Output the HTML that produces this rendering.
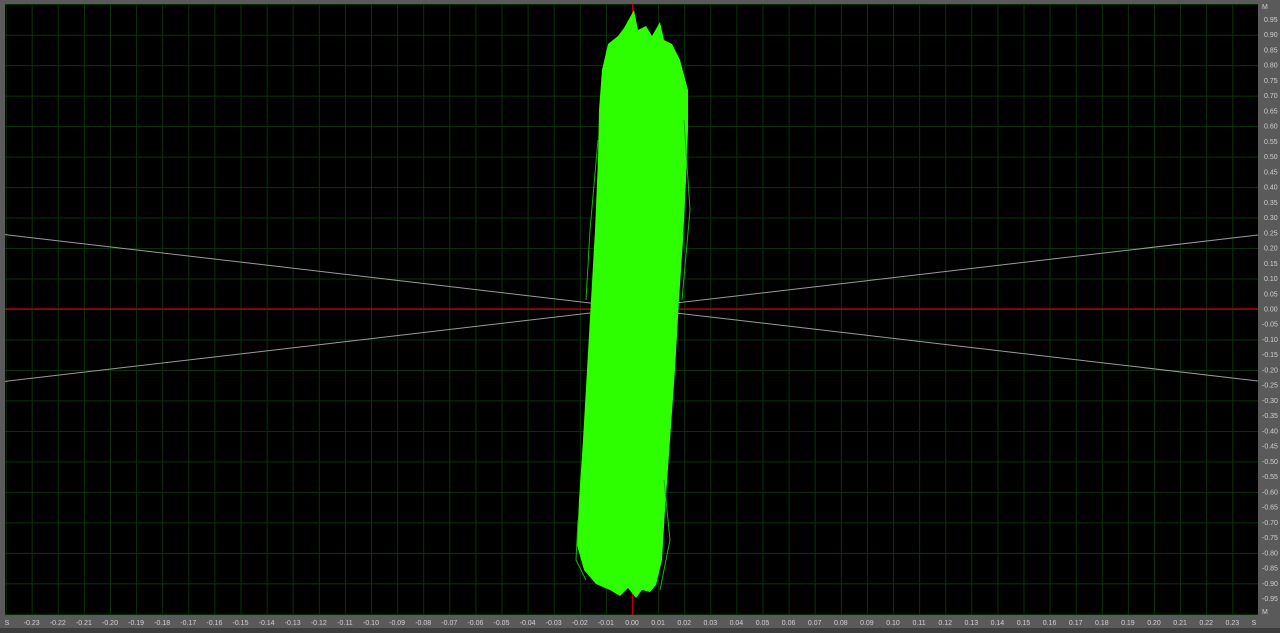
<!DOCTYPE html>
<html><head><meta charset="utf-8"><style>
html,body{margin:0;padding:0;background:#3a3a3a;width:1280px;height:633px;overflow:hidden}
svg{display:block}
text{font-family:"Liberation Sans",sans-serif;font-size:7px;fill:#cfcfcf}
</style></head><body>
<svg width="1280" height="633" viewBox="0 0 1280 633">
<defs>
<pattern id="g" patternUnits="userSpaceOnUse" x="632" y="309" width="26.1" height="30.48">
<rect width="26.1" height="30.48" fill="#000"/>
<line x1="0.5" y1="0" x2="0.5" y2="30.48" stroke="#0a330a" stroke-width="1"/>
<line x1="0" y1="0.5" x2="26.1" y2="0.5" stroke="#0a330a" stroke-width="1"/>
</pattern>
<clipPath id="c"><rect x="5" y="4" width="1253" height="611"/></clipPath>
</defs>
<rect x="0" y="0" width="1280" height="633" fill="#5a5a5a"/>
<rect x="0" y="628" width="1280" height="5" fill="#3c3c3c"/>
<rect x="5" y="4" width="1253" height="611" fill="url(#g)"/>
<g clip-path="url(#c)">
<line x1="0" y1="234" x2="1258" y2="381" stroke="#9a9a9a" stroke-width="1"/>
<line x1="0" y1="382" x2="1258" y2="235" stroke="#9a9a9a" stroke-width="1"/>
<line x1="5" y1="309" x2="1258" y2="309" stroke="#c00000" stroke-width="1.2"/>
<line x1="632.5" y1="4" x2="632.5" y2="615" stroke="#c00000" stroke-width="1.2"/>
<path d="M634,10 L638,30 L646,26 L652,36 L660,22 L664,40 L672,44 L680,60 L688,90 L688,130 L686,180 L683,240 L679,300 L675,370 L670,440 L665,510 L662,560 L656,585 L650,592 L642,590 L636,598 L628,588 L620,596 L610,590 L596,584 L584,570 L577,545 L579,500 L583,440 L587,370 L591,300 L595,230 L598,160 L599,110 L602,70 L608,44 L618,36 L624,28 Z" fill="#2eff00"/>
<path d="M598,140 L590,230 L586,300 M684,120 L690,210 L682,300 M578,520 L576,560 L586,580 M664,480 L670,540 L660,590" stroke="#1fb000" stroke-width="1" fill="none"/>
</g>
<g text-anchor="middle">
<text x="7" y="625">S</text>
<text x="31.7" y="625">-0.23</text><text x="57.8" y="625">-0.22</text><text x="83.9" y="625">-0.21</text><text x="110" y="625">-0.20</text><text x="136.1" y="625">-0.19</text><text x="162.2" y="625">-0.18</text><text x="188.3" y="625">-0.17</text><text x="214.4" y="625">-0.16</text><text x="240.5" y="625">-0.15</text><text x="266.6" y="625">-0.14</text><text x="292.7" y="625">-0.13</text><text x="318.8" y="625">-0.12</text><text x="344.9" y="625">-0.11</text><text x="371" y="625">-0.10</text><text x="397.1" y="625">-0.09</text><text x="423.2" y="625">-0.08</text><text x="449.3" y="625">-0.07</text><text x="475.4" y="625">-0.06</text><text x="501.5" y="625">-0.05</text><text x="527.6" y="625">-0.04</text><text x="553.7" y="625">-0.03</text><text x="579.8" y="625">-0.02</text><text x="605.9" y="625">-0.01</text>
<text x="632" y="625">0.00</text>
<text x="658.1" y="625">0.01</text><text x="684.2" y="625">0.02</text><text x="710.3" y="625">0.03</text><text x="736.4" y="625">0.04</text><text x="762.5" y="625">0.05</text><text x="788.6" y="625">0.06</text><text x="814.7" y="625">0.07</text><text x="840.8" y="625">0.08</text><text x="866.9" y="625">0.09</text><text x="893" y="625">0.10</text><text x="919.1" y="625">0.11</text><text x="945.2" y="625">0.12</text><text x="971.3" y="625">0.13</text><text x="997.4" y="625">0.14</text><text x="1023.5" y="625">0.15</text><text x="1049.6" y="625">0.16</text><text x="1075.7" y="625">0.17</text><text x="1101.8" y="625">0.18</text><text x="1127.9" y="625">0.19</text><text x="1154" y="625">0.20</text><text x="1180.1" y="625">0.21</text><text x="1206.2" y="625">0.22</text><text x="1232.3" y="625">0.23</text>
<text x="1254" y="625">S</text>
</g>
<g text-anchor="start">
<text x="1262" y="9">M</text>
<text x="1264" y="22">0.95</text><text x="1264" y="37.2">0.90</text><text x="1264" y="52.4">0.85</text><text x="1264" y="67.7">0.80</text><text x="1264" y="82.9">0.75</text><text x="1264" y="98.1">0.70</text><text x="1264" y="113.4">0.65</text><text x="1264" y="128.6">0.60</text><text x="1264" y="143.9">0.55</text><text x="1264" y="159.1">0.50</text><text x="1264" y="174.3">0.45</text><text x="1264" y="189.6">0.40</text><text x="1264" y="204.8">0.35</text><text x="1264" y="220.1">0.30</text><text x="1264" y="235.3">0.25</text><text x="1264" y="250.5">0.20</text><text x="1264" y="265.8">0.15</text><text x="1264" y="281">0.10</text><text x="1264" y="296.3">0.05</text>
<text x="1264" y="311.5">0.00</text>
<text x="1262" y="326.7">-0.05</text><text x="1262" y="342">-0.10</text><text x="1262" y="357.2">-0.15</text><text x="1262" y="372.5">-0.20</text><text x="1262" y="387.7">-0.25</text><text x="1262" y="402.9">-0.30</text><text x="1262" y="418.2">-0.35</text><text x="1262" y="433.4">-0.40</text><text x="1262" y="448.7">-0.45</text><text x="1262" y="463.9">-0.50</text><text x="1262" y="479.1">-0.55</text><text x="1262" y="494.4">-0.60</text><text x="1262" y="509.6">-0.65</text><text x="1262" y="524.9">-0.70</text><text x="1262" y="540.1">-0.75</text><text x="1262" y="555.3">-0.80</text><text x="1262" y="570.6">-0.85</text><text x="1262" y="585.8">-0.90</text><text x="1262" y="601.1">-0.95</text>
<text x="1262" y="614">M</text>
</g>
</svg>
</body></html>
